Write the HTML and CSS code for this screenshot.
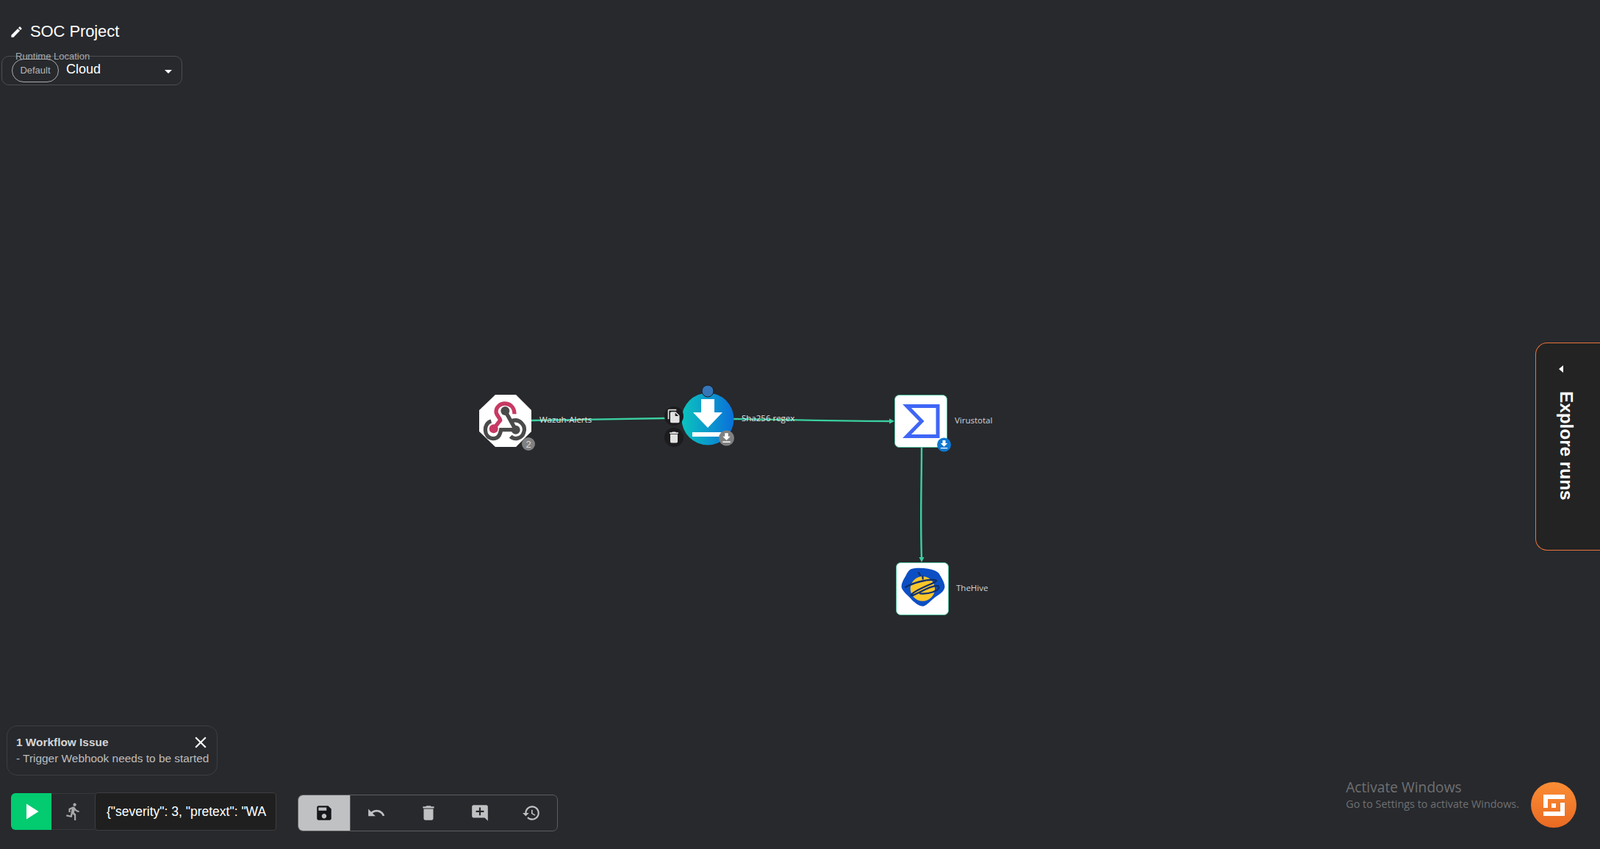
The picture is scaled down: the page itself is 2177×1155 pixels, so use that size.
FILE: index.html
```html
<!DOCTYPE html>
<html lang="en">
<head>
    <meta charset="UTF-8">
    <meta name="viewport" content="width=device-width, initial-scale=1.0">
    <title>SOC Project</title>
    <link rel="stylesheet" href="styles.css">
</head>
<body>
    <div class="page">
        <!-- workflow graph, node places are the content here -->
        <svg class="graph" viewBox="0 0 2177 1155" width="2177" height="1155">
            <defs>
                <linearGradient id="dlGrad" x1="0" y1="0" x2="1" y2="0">
                    <stop offset="0" stop-color="#0bc4bd"/>
                    <stop offset="1" stop-color="#0a70da"/>
                </linearGradient>
            </defs>

            <path class="edge" d="M723 572 L905 569"/>
            <path class="edge" d="M998 570 C1060 570 1100 573 1212 573"/>
            <path class="arrow" d="M1217 573 l-7 -3.5 v7 z"/>
            <path class="edge" d="M1254 609 C1254 660 1252 700 1254 760"/>
            <path class="arrow" d="M1254 765 l-3.5 -7 h7 z"/>

            <text class="edge-label" x="734" y="575">Wazuh-Alerts</text>
            <text class="edge-label" x="1009" y="573">Sha256 regex</text>

            <!-- webhook trigger -->
            <path class="node-white" d="M674 537 H702 L723 558 V587 L702 608 H674 L652 587 V558 Z"/>
            <svg x="650" y="535" width="76" height="76" viewBox="0 0 228 228">
                <path class="hook-dark" d="M55 114 C22 122 22 182 62 185 C85 186 92 168 95 149 H155"/>
                <path class="hook-dark" d="M138 114 C172 100 198 135 188 160 C180 185 150 192 134 176"/>
                <path class="hook-dark" d="M112 72 L155 149"/>
                <circle class="hook-dot" cx="112" cy="72" r="18"/>
                <circle class="hook-dot" cx="155" cy="149" r="18"/>
                <path class="hook-pink" d="M150 85 C150 55 130 42 110 42 C90 42 75 58 75 75 C75 90 90 98 92 110 L65 145"/>
                <circle class="hook-pinkdot" cx="65" cy="145" r="18"/>
            </svg>
            <circle class="badge-gray" cx="719" cy="604" r="9"/>
            <text class="badge-text" x="719" y="608.5">2</text>

            <!-- http / download action -->
            <circle cx="963" cy="570" r="35.5" fill="url(#dlGrad)"/>
            <path class="icon-white" d="M954 543 H972 V561 H983 L963 582 L943 561 H954 Z"/>
            <rect class="icon-white" x="942" y="588" width="42" height="6"/>
            <circle class="port" cx="963" cy="532" r="8"/>
            <circle class="tool-btn" cx="917" cy="566" r="13"/>
            <svg class="icon-light" x="907" y="556" width="20" height="20" viewBox="0 0 24 24"><path d="M16 1H4c-1.1 0-2 .9-2 2v14h2V3h12V1zm-1 4l6 6v10c0 1.1-.9 2-2 2H7.99C6.89 23 6 22.1 6 21l.01-14c0-1.1.89-2 1.99-2h7zm-1 7h5.5L14 6.5V12z"/></svg>
            <circle class="tool-btn" cx="917" cy="595" r="13"/>
            <svg class="icon-light" x="907" y="585" width="20" height="20" viewBox="0 0 24 24"><path d="M6 19c0 1.1.9 2 2 2h8c1.1 0 2-.9 2-2V7H6v12zM19 4h-3.5l-1-1h-5l-1 1H5v2h14V4z"/></svg>
            <circle class="badge-gray" cx="988.5" cy="596" r="10.5"/>
            <svg class="icon-white" x="979.5" y="587" width="18" height="18" viewBox="0 0 24 24"><path d="M19 9h-4V3H9v6H5l7 7 7-7zM5 18v2h14v-2H5z"/></svg>

            <!-- virustotal -->
            <rect class="node-card" x="1217.5" y="537.5" width="71" height="71" rx="6"/>
            <path class="vt-sigma" d="M1276 552.5 H1234 L1254 573 L1234 593.5 H1276 Z"/>
            <circle class="badge-blue" cx="1284.5" cy="605" r="9.5"/>
            <svg class="icon-white" x="1276.5" y="597" width="16" height="16" viewBox="0 0 24 24"><path d="M19 9h-4V3H9v6H5l7 7 7-7zM5 18v2h14v-2H5z"/></svg>
            <text class="node-label" x="1299" y="576">Virustotal</text>

            <!-- thehive -->
            <rect class="node-card" x="1219.5" y="765.5" width="71" height="71" rx="6"/>
            <svg x="1222" y="770" width="66" height="62" viewBox="0 0 198 186">
                <path class="hive-shell" d="M52 13 C75 6 100 8 122 11 C140 14 160 20 168 32 C178 50 192 70 190 88 C186 105 170 116 150 128 C132 142 120 158 104 164 C88 166 72 152 58 140 C42 122 18 104 14 88 C12 70 24 52 32 38 C38 26 44 17 52 13 Z"/>
                <circle class="hive-body" cx="100" cy="93" r="50"/>
                <path class="hive-line" d="M30 86 C55 72 120 50 155 58 C166 66 90 85 55 115 C44 130 70 116 110 96 C130 86 165 74 166 86 C166 100 130 116 90 112"/>
                <path class="hive-line" d="M84 28 L90 38 M100 42 L101 52"/>
            </svg>
            <text class="node-label" x="1301" y="804">TheHive</text>
        </svg>

        <header class="top">
            <div class="title-row">
                <svg class="pencil" viewBox="0 0 24 24" width="19" height="19"><path d="M3 17.25V21h3.75L17.81 9.94l-3.75-3.75L3 17.25zM20.71 7.04c.39-.39.39-1.02 0-1.41l-2.34-2.34c-.39-.39-1.02-.39-1.41 0l-1.83 1.83 3.75 3.75 1.83-1.83z"/></svg>
                <h1>SOC Project</h1>
            </div>
            <div class="runtime">
                <span class="runtime-label">Runtime Location</span>
                <span class="pill">Default</span>
                <span class="runtime-value">Cloud</span>
                <svg class="caret" viewBox="0 0 24 24" width="24" height="24"><path d="M7 10l5 5 5-5z"/></svg>
            </div>
        </header>

        <aside class="explore">
            <span class="explore-arrow"></span>
            <span class="explore-text">Explore runs</span>
        </aside>

        <footer class="bottom">
            <div class="issue">
                <div class="issue-head">
                    <strong>1 Workflow Issue</strong>
                    <svg class="issue-close" viewBox="0 0 24 24" width="26" height="26"><path d="M19 6.41L17.59 5 12 10.59 6.41 5 5 6.41 10.59 12 5 17.59 6.41 19 12 13.41 17.59 19 19 17.59 13.41 12z"/></svg>
                </div>
                <div class="issue-text">- Trigger Webhook needs to be started</div>
            </div>
            <div class="controls">
                <div class="run-bar">
                    <button class="run-play"><svg viewBox="0 0 24 24" width="36" height="36"><path d="M8 5v14l11-7z"/></svg></button>
                    <button class="run-step"><svg viewBox="0 0 24 24" width="26" height="26"><path d="M13.49 5.48c1.1 0 2-.9 2-2s-.9-2-2-2-2 .9-2 2 .9 2 2 2zm-3.6 13.9l1-4.4 2.1 2v6h2v-7.5l-2.1-2 .6-3c1.3 1.5 3.3 2.5 5.5 2.5v-2c-1.9 0-3.5-1-4.3-2.4l-1-1.6c-.4-.6-1-1-1.7-1-.3 0-.5.1-.8.1l-5.2 2.2v4.7h2v-3.4l1.8-.7-1.6 8.1-4.9-1-.4 2 7 1.4z"/></svg></button>
                    <div class="run-input">{"severity": 3, "pretext": "WA</div>
                </div>
                <div class="toolbar">
                    <button class="tool tool-active"><svg viewBox="0 0 24 24" width="26" height="26"><path d="M17 3H5c-1.11 0-2 .9-2 2v14c0 1.1.89 2 2 2h14c1.1 0 2-.9 2-2V7l-4-4zm-5 16c-1.66 0-3-1.34-3-3s1.34-3 3-3 3 1.34 3 3-1.34 3-3 3zm3-10H5V5h10v4z"/></svg></button>
                    <button class="tool"><svg viewBox="0 0 24 24" width="26" height="26"><path d="M12.5 8c-2.65 0-5.05.99-6.9 2.6L2 7v9h9l-3.62-3.62c1.39-1.16 3.16-1.88 5.12-1.88 3.54 0 6.55 2.31 7.6 5.5l2.37-.78C21.08 11.03 17.15 8 12.5 8z"/></svg></button>
                    <button class="tool"><svg viewBox="0 0 24 24" width="26" height="26"><path d="M6 19c0 1.1.9 2 2 2h8c1.1 0 2-.9 2-2V7H6v12zM19 4h-3.5l-1-1h-5l-1 1H5v2h14V4z"/></svg></button>
                    <button class="tool"><svg viewBox="0 0 24 24" width="26" height="26"><path d="M21.99 4c0-1.1-.89-2-1.99-2H4c-1.1 0-2 .9-2 2v12c0 1.1.9 2 2 2h14l4 4-.01-18zM17 11h-4v4h-2v-4H7V9h4V5h2v4h4v2z"/></svg></button>
                    <button class="tool"><svg viewBox="0 0 24 24" width="26" height="26"><path d="M13 3c-4.97 0-9 4.03-9 9H1l3.89 3.89.07.14L9 12H6c0-3.87 3.13-7 7-7s7 3.13 7 7-3.13 7-7 7c-1.93 0-3.68-.79-4.94-2.06l-1.42 1.42C8.27 19.99 10.51 21 13 21c4.97 0 9-4.03 9-9s-4.03-9-9-9zm-1 5v5l4.28 2.54.72-1.21-3.5-2.08V8H12z"/></svg></button>
                </div>
                <div class="watermark">
                    <div class="watermark-title">Activate Windows</div>
                    <div class="watermark-sub">Go to Settings to activate Windows.</div>
                </div>
                <div class="chat-fab">
                    <svg viewBox="0 0 29 29" width="29" height="29"><path d="M0 0H29V6H6V18H0Z M29 11V29H0V23H23V11Z M11 12H17V18H11Z"/></svg>
                </div>
            </div>
        </footer>
    </div>
</body>
</html>
```

FILE: styles.css
```css
* {
    box-sizing: border-box;
}
body {
    margin: 0;
    background: #27292d;
    font-family: "Liberation Sans", Arial, sans-serif;
    color: #fff;
}
.page {
    position: relative;
    height: 100vh;
    overflow: hidden;
    display: flex;
    flex-direction: column;
    justify-content: space-between;
}

/* graph */
.graph {
    position: absolute;
    top: 0;
    left: 0;
}
.edge {
    fill: none;
    stroke: #3bcf9f;
    stroke-width: 2.4;
}
.arrow {
    fill: #3bcf9f;
}
.edge-label {
    font-family: "Open Sans", sans-serif;
    font-size: 11.5px;
    fill: #e2e3e4;
}
.node-label {
    font-family: "Open Sans", sans-serif;
    font-size: 11.5px;
    fill: #d4d5d6;
}
.node-white {
    fill: #fff;
}
.node-card {
    fill: #fff;
    stroke: #4fbf9c;
    stroke-width: 1;
}
.hook-dark {
    fill: none;
    stroke: #4a4a4a;
    stroke-width: 16;
}
.hook-dot {
    fill: #4a4a4a;
}
.hook-pink {
    fill: none;
    stroke: #c73a63;
    stroke-width: 16;
}
.hook-pinkdot {
    fill: #c73a63;
}
.badge-gray {
    fill: #808080;
}
.badge-blue {
    fill: #0f78d2;
}
.badge-text {
    font-size: 13px;
    text-anchor: middle;
    fill: #d8d8d8;
}
.icon-white {
    fill: #fff;
}
.icon-light {
    fill: #e2e2e2;
}
.port {
    fill: #3476b8;
    stroke: #1c1c1f;
    stroke-width: 1;
}
.tool-btn {
    fill: #1c1c1f;
}
.vt-sigma {
    fill: none;
    stroke: #3f66f5;
    stroke-width: 5;
}
.hive-shell {
    fill: #0c4fc4;
}
.hive-body {
    fill: #fcc62a;
}
.hive-line {
    fill: none;
    stroke: #10306f;
    stroke-width: 7;
    stroke-linecap: round;
    stroke-linejoin: round;
}

/* top left */
.top {
    position: relative;
    padding: 31px 0 0 2px;
}
.title-row {
    display: flex;
    align-items: center;
    gap: 9px;
    padding-left: 11px;
    height: 24px;
}
.pencil {
    fill: #fff;
    margin-top: 1px;
}
.title-row h1 {
    margin: 0;
    font-size: 22px;
    font-weight: 400;
    letter-spacing: -0.1px;
}
.runtime {
    position: relative;
    display: flex;
    align-items: center;
    width: 246px;
    height: 40px;
    margin-top: 21px;
    padding: 0 13px;
    border: 1px solid #4d4e52;
    border-radius: 10px;
}
.runtime-label {
    position: absolute;
    top: -8px;
    left: 18px;
    font-size: 13px;
    color: #a9aaac;
}
.pill {
    width: 64px;
    height: 32px;
    line-height: 30px;
    border: 1px solid #a9aaac;
    border-radius: 16px;
    text-align: center;
    font-size: 13px;
    color: #b5b6b7;
}
.runtime-value {
    margin-left: 10px;
    font-size: 18px;
    margin-top: -3px;
}
.caret {
    fill: #fff;
    margin-left: auto;
    margin-right: -7px;
    margin-top: 2px;
}

/* explore tab */
.explore {
    position: absolute;
    top: 466px;
    right: 0;
    width: 88px;
    height: 283px;
    background: #232323;
    border: 1px solid #e8733a;
    border-right: none;
    border-radius: 16px 0 0 16px;
    padding: 30px 0 0 28px;
}
.explore-arrow {
    display: block;
    width: 0;
    height: 0;
    border-style: solid;
    border-width: 5px 6px 5px 0;
    border-color: transparent #fff transparent transparent;
    margin-left: 3px;
}
.explore-text {
    display: block;
    margin-top: 25px;
    writing-mode: vertical-rl;
    font-size: 24.3px;
    font-weight: 700;
    line-height: 26px;
}

/* bottom */
.bottom {
    position: relative;
    padding: 0 32px 24px 9px;
}
.issue {
    width: 287px;
    height: 68px;
    padding: 12px 0 0 12px;
    border: 1px solid #3d3e42;
    border-radius: 14px;
    margin-bottom: 3px;
}
.issue-head {
    display: flex;
    justify-content: space-between;
    align-items: center;
    height: 20px;
    padding-right: 9px;
    font-size: 15.4px;
    color: #d6d6d6;
}
.issue-close {
    fill: #fff;
}
.issue-text {
    margin-top: 3px;
    font-size: 15.4px;
    color: #bdbdbd;
    white-space: nowrap;
}
.controls {
    display: flex;
    align-items: flex-end;
    padding-left: 6px;
}
.run-bar {
    display: flex;
    align-items: center;
    height: 52px;
    margin-bottom: 1px;
}
.run-bar button,
.toolbar button {
    padding: 0;
    border: none;
    display: flex;
    align-items: center;
    justify-content: center;
}
.run-play {
    width: 55px;
    height: 50px;
    background: #02cb70;
    border-radius: 6px 0 0 6px;
}
.run-play svg {
    fill: #fff;
    margin-right: 2px;
}
.run-step {
    width: 59px;
    height: 50px;
    background: transparent;
    border-top: 1px solid #37383c !important;
    border-bottom: 1px solid #37383c !important;
}
.run-step svg {
    fill: #a8a9aa;
}
.run-input {
    width: 247px;
    height: 52px;
    line-height: 50px;
    padding-left: 15px;
    background: #1f1f1f;
    border: 1px solid #3e3e40;
    border-radius: 4px;
    font-size: 17.5px;
    white-space: nowrap;
    overflow: hidden;
}
.toolbar {
    display: flex;
    width: 354px;
    height: 50px;
    margin-left: 29px;
    border: 1px solid #5c5d60;
    border-radius: 7px;
    overflow: hidden;
}
.tool {
    flex: 1;
    background: transparent;
}
.tool svg {
    fill: #c0c1c2;
}
.tool-active {
    background: #c0c1c2;
    border-right: 1px solid #5c5d60 !important;
}
.tool-active svg {
    fill: #16171a;
}
.watermark {
    margin-left: auto;
    margin-bottom: 27px;
    font-family: "Open Sans", sans-serif;
    color: #6f7072;
}
.watermark-title {
    font-size: 19.2px;
    line-height: 25px;
}
.watermark-sub {
    font-size: 14.4px;
    line-height: 21px;
}
.chat-fab {
    width: 62px;
    height: 62px;
    margin-left: 16px;
    margin-bottom: 5px;
    border-radius: 50%;
    background: linear-gradient(#fb8d34, #e96a23);
    display: flex;
    align-items: center;
    justify-content: center;
}
.chat-fab svg {
    fill: #fff;
}
```
